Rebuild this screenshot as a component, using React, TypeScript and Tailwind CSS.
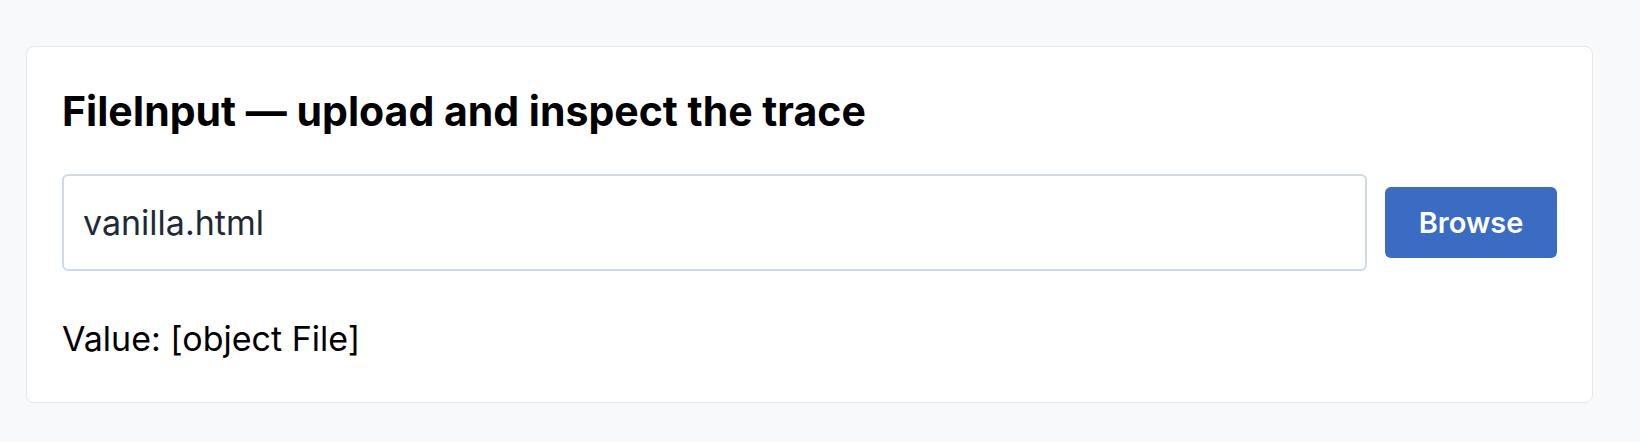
import React from "react";

export default function App() {
  return (
    <div
      className="min-h-screen bg-[#f8f9fb] pt-[46px] pl-[26px] pr-[47px]"
      style={{ fontFamily: "Inter, 'Noto Sans', sans-serif" }}
    >
      <div className="h-[357px] rounded-lg border border-[#e5e7eb] bg-white px-[35px] pt-[39px]">
        <h1 className="text-[41px] font-bold leading-[50px] text-black">
          FileInput — upload and inspect the trace
        </h1>
        <div className="mt-[38px] flex items-center gap-[18px]">
          <div className="flex h-[97px] flex-1 items-center rounded-md border-2 border-[#cfdae5] px-[19px] text-[34px] text-[#1f2937]">
            vanilla.html
          </div>
          <button className="h-[71px] w-[172px] rounded-md bg-[#3b6cc4] text-[29px] font-semibold text-white">
            Browse
          </button>
        </div>
        <p className="mt-[48px] text-[34px] leading-[40px] text-black">Value: [object File]</p>
      </div>
    </div>
  );
}
